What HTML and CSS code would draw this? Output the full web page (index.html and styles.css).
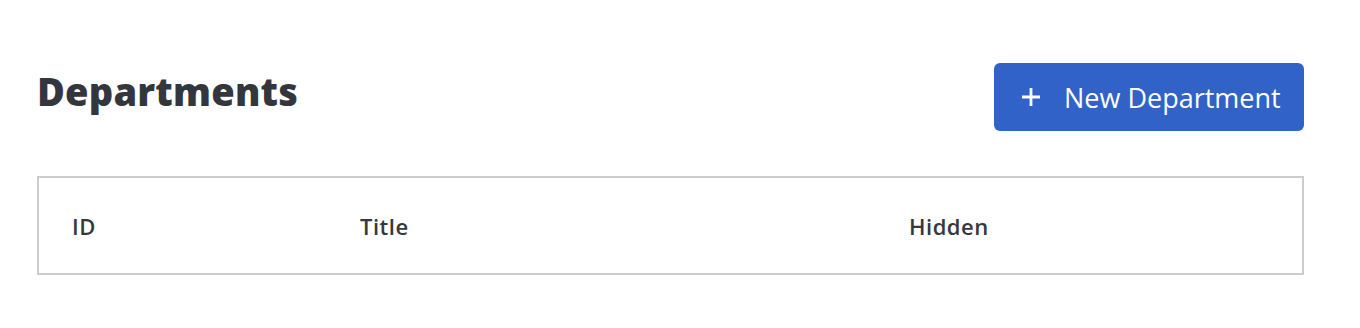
FILE: index.html
```html
<!DOCTYPE html>
<html lang="en">
<head>
<meta charset="utf-8">
<title>Departments</title>
<link rel="stylesheet" href="styles.css">
</head>
<body>
<main class="page">
  <header class="page-header">
    <h1 class="page-title">Departments</h1>
    <button class="btn-primary" type="button">
      <svg class="btn-icon" width="22" height="22" viewBox="0 0 22 22" aria-hidden="true">
        <path d="M11 2v18M2 11h18" stroke="#fff" stroke-width="2.8" fill="none"/>
      </svg>
      <span>New Department</span>
    </button>
  </header>
  <table class="data-table">
    <thead>
      <tr>
        <th class="col-id">ID</th>
        <th class="col-title">Title</th>
        <th class="col-hidden">Hidden</th>
      </tr>
    </thead>
  </table>
</main>
</body>
</html>
```

FILE: styles.css
```css
html, body {
  margin: 0;
  padding: 0;
  background: #fff;
}
body {
  font-family: "Open Sans", "Liberation Sans", sans-serif;
  color: #35383d;
}
.page {
  padding: 63px 56px 0 37px;
}
.page-header {
  display: flex;
  justify-content: space-between;
  align-items: center;
  height: 68px;
}
.page-title {
  margin: 0;
  font-family: "Open Sans", "Liberation Sans", sans-serif;
  font-weight: 800;
  font-size: 38px;
  letter-spacing: 0.2px;
  color: #33373d;
  position: relative;
  top: -6px;
}
.btn-primary {
  display: flex;
  align-items: center;
  gap: 22px;
  height: 68px;
  width: 310px;
  padding: 0 0 0 26px;
  border: none;
  border-radius: 6px;
  background: #3062c8;
  color: #fff;
  font-family: "Open Sans", "Liberation Sans", sans-serif;
  font-size: 27px;
  font-weight: 400;
  cursor: pointer;
}
.btn-icon {
  flex: none;
}
.data-table {
  margin-top: 45px;
  width: 100%;
  border-collapse: collapse;
  border: 2px solid #cccccc;
  table-layout: fixed;
}
.data-table th {
  height: 95px;
  padding: 0;
  text-align: left;
  font-family: "Open Sans", "Liberation Sans", sans-serif;
  font-size: 22px;
  font-weight: 600;
  letter-spacing: 0.5px;
  color: #35383d;
  vertical-align: middle;
}
.col-id {
  width: 322px;
  padding-left: 33px !important;
  box-sizing: border-box;
}
.col-title {
  width: 549px;
}
```
